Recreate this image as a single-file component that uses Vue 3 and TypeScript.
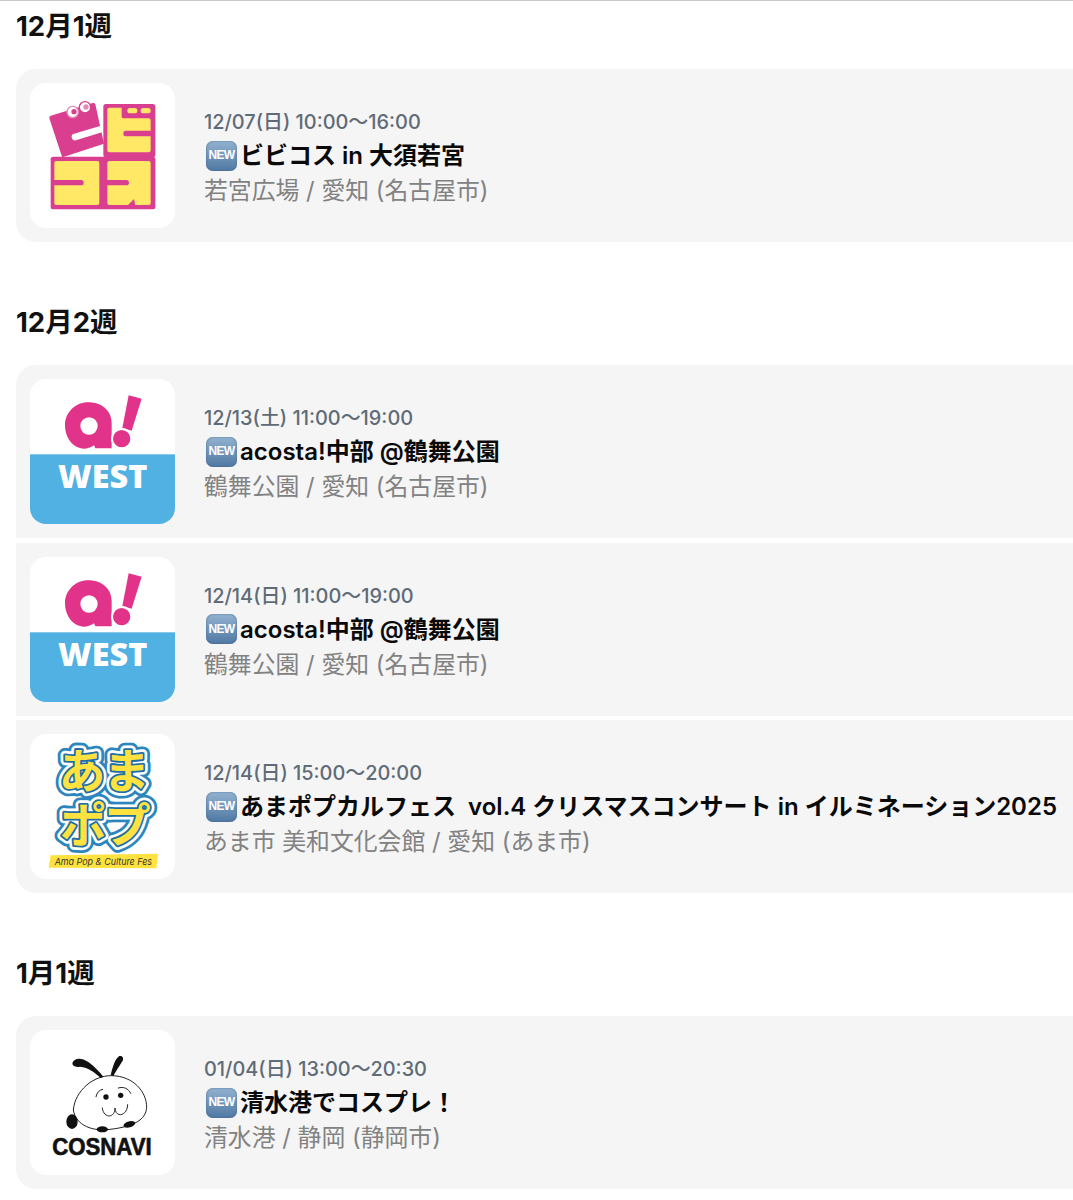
<script setup lang="ts">
type Logo = 'bibi' | 'west' | 'ama' | 'cosnavi'

interface EventItem {
  logo: Logo
  date: string
  title: string
  place: string
}

interface Week {
  label: string
  events: EventItem[]
}

const weeks: Week[] = [
  {
    label: '12月1週',
    events: [
      { logo: 'bibi', date: '12/07(日) 10:00〜16:00', title: 'ビビコス in 大須若宮', place: '若宮広場 / 愛知 (名古屋市)' }
    ]
  },
  {
    label: '12月2週',
    events: [
      { logo: 'west', date: '12/13(土) 11:00〜19:00', title: 'acosta!中部 @鶴舞公園', place: '鶴舞公園 / 愛知 (名古屋市)' },
      { logo: 'west', date: '12/14(日) 11:00〜19:00', title: 'acosta!中部 @鶴舞公園', place: '鶴舞公園 / 愛知 (名古屋市)' },
      { logo: 'ama', date: '12/14(日) 15:00〜20:00', title: 'あまポプカルフェス  vol.4 クリスマスコンサート in イルミネーション2025', place: 'あま市 美和文化会館 / 愛知 (あま市)' }
    ]
  },
  {
    label: '1月1週',
    events: [
      { logo: 'cosnavi', date: '01/04(日) 13:00〜20:30', title: '清水港でコスプレ！', place: '清水港 / 静岡 (静岡市)' }
    ]
  }
]
</script>

<template>
  <div class="page">
    <section v-for="week in weeks" :key="week.label" class="week">
      <h2 class="week-label">{{ week.label }}</h2>
      <div class="event-list">
        <div v-for="(ev, i) in week.events" :key="i" class="event">
          <div class="thumb">
            <svg v-if="ev.logo === 'bibi'" viewBox="30 24 435 435" width="145" height="145">
              <rect x="250" y="87" width="156" height="160" rx="8" fill="#d93f8e" />
              <rect x="92" y="245" width="314" height="158" rx="8" fill="#d93f8e" />
              <path d="M262 104 Q262 98 268 98 L305 98 L305 125 Q305 130 312 130 L386 130 Q392 130 392 136 L392 226 Q392 232 386 232 L268 232 Q262 232 262 226 Z" fill="#ffe866" />
              <rect x="322" y="99" width="30" height="16" rx="8" fill="#ffe866" />
              <rect x="362" y="99" width="30" height="16" rx="8" fill="#ffe866" />
              <rect x="310" y="167" width="90" height="17" rx="8" fill="#d93f8e" />
              <rect x="103" y="258" width="135" height="132" rx="6" fill="#ffe866" />
              <rect x="95" y="315" width="96" height="16" rx="8" fill="#d93f8e" />
              <rect x="262" y="258" width="130" height="132" rx="6" fill="#ffe866" />
              <rect x="255" y="315" width="72" height="16" rx="8" fill="#d93f8e" />
              <path d="M322 392 L342 372 L346 392 Z" fill="#d93f8e" />
              <path d="M92 122 L218 84 Q224 83 226 88 L252 206 L130 246 Q126 247 125 242 L88 130 Q87 124 92 122 Z" fill="#d93f8e" />
              <path d="M165 186 L238 164" stroke="#fff" stroke-width="20" stroke-linecap="round" />
              <circle cx="158" cy="111" r="17" fill="#fff" stroke="#e58ab8" stroke-width="4" />
              <circle cx="162" cy="110" r="8" fill="#d93f8e" />
              <circle cx="195" cy="97" r="17" fill="#fff" stroke="#d93f8e" stroke-width="4" />
              <circle cx="198" cy="96" r="8" fill="#e58ab8" />
            </svg>

            <svg v-else-if="ev.logo === 'west'" viewBox="30 27 435 435" width="145" height="145">
              <rect x="30" y="253" width="435" height="209" fill="#50b1e2" />
              <path d="M205 97 C245 97 275 122 275 160 L275 235 L226 235 L222 226 C212 233 202 236 192 236 C160 236 135 204 135 166 C135 128 165 97 205 97 Z" fill="#e2338b" />
              <circle cx="207" cy="168" r="26" fill="#fff" />
              <path d="M326 76 L365 86 L335 182 L307 174 Z" fill="#e2338b" />
              <circle cx="305" cy="206" r="29" fill="#e2338b" stroke="#fff" stroke-width="6" />
              <text x="248" y="353" text-anchor="middle" textLength="268" lengthAdjust="spacingAndGlyphs" class="west-text">WEST</text>
            </svg>

            <svg v-else-if="ev.logo === 'ama'" viewBox="30 27 435 435" width="145" height="145">
              <defs>
                <g id="ama-glyphs" class="ama-text">
                  <text x="186" y="190">あ</text><text x="320" y="190">ま</text>
                  <text x="190" y="350">ポ</text><text x="322" y="350">プ</text>
                </g>
              </defs>
              <g stroke-linejoin="round">
                <use href="#ama-glyphs" fill="#2a86bd" stroke="#2a86bd" stroke-width="44" />
                <use href="#ama-glyphs" fill="#fff" stroke="#fff" stroke-width="27" />
                <use href="#ama-glyphs" fill="#1d6ea6" stroke="#1d6ea6" stroke-width="11" />
                <use href="#ama-glyphs" fill="#ffe23f" />
              </g>
              <path d="M92 391 L414 386 L409 430 L86 428 Z" fill="#ffe23f" />
              <text x="250" y="420" text-anchor="middle" textLength="292" lengthAdjust="spacingAndGlyphs" class="ama-sub">Ama Pop &amp; Culture Fes</text>
            </svg>

            <svg v-else viewBox="30 30 435 435" width="145" height="145">
              <path d="M160 270 C165 212 220 166 275 167 C340 168 380 215 380 262 C378 300 340 320 270 328 C220 335 168 318 160 270 Z" fill="#fff" stroke="#222" stroke-width="3" />
              <path d="M157 130 C162 112 185 112 205 126 C222 138 238 155 250 170 L242 174 C225 158 205 142 180 140 C168 142 158 140 157 130 Z" fill="#111" />
              <path d="M272 166 C278 140 286 115 298 108 C308 106 312 114 308 122 C298 138 288 152 280 168 Z" fill="#111" />
              <ellipse cx="156" cy="305" rx="17" ry="22" fill="#111" />
              <ellipse cx="247" cy="328" rx="17" ry="9" fill="#111" />
              <ellipse cx="328" cy="313" rx="18" ry="9" transform="rotate(-15 328 313)" fill="#111" />
              <circle cx="258" cy="231" r="8" fill="#111" />
              <circle cx="302" cy="226" r="8" fill="#111" />
              <g fill="none" stroke="#222" stroke-width="3" stroke-linecap="round">
                <path d="M228 230 C230 218 238 210 248 208" />
                <path d="M295 204 C310 199 325 205 332 220" />
                <path d="M247 264 C250 296 285 296 285 264 C286 294 322 290 323 254" />
              </g>
              <text x="246" y="406" text-anchor="middle" textLength="298" lengthAdjust="spacingAndGlyphs" class="cosnavi-text">COSNAVI</text>
            </svg>
          </div>

          <div class="info">
            <div class="date">{{ ev.date }}</div>
            <div class="title">
              <span class="new-badge">NEW</span>{{ ev.title }}
            </div>
            <div class="place">{{ ev.place }}</div>
          </div>
        </div>
      </div>
    </section>
  </div>
</template>

<style>
html,
body {
  margin: 0;
  background: #fff;
}
</style>

<style scoped>
.page {
  width: 1073px;
  height: 1200px;
  box-sizing: border-box;
  overflow: hidden;
  border-top: 1px solid #c9c9c9;
  padding-left: 16px;
  font-family: Inter, "Noto Sans CJK JP", sans-serif;
  background: #fff;
}

.week {
  margin-bottom: 55px;
}

.week-label {
  margin: 0 0 18px;
  height: 50px;
  line-height: 50px;
  font-size: 27.5px;
  font-weight: 700;
  color: #111;
}

.event-list {
  display: flex;
  flex-direction: column;
  gap: 4.5px;
  margin-right: -30px;
  border-radius: 20px;
  overflow: hidden;
}

.event {
  display: flex;
  align-items: center;
  gap: 29px;
  height: 173px;
  box-sizing: border-box;
  padding: 14px;
  background: #f5f5f5;
}

.thumb {
  flex: none;
  width: 145px;
  height: 145px;
  border-radius: 16px;
  background: #fff;
  overflow: hidden;
}

.thumb svg {
  display: block;
}

.info {
  display: flex;
  flex-direction: column;
  min-width: 0;
}

.date {
  height: 35px;
  line-height: 38px;
  font-size: 19.9px;
  font-weight: 500;
  color: #5f6b76;
  white-space: nowrap;
}

.title {
  display: flex;
  align-items: center;
  height: 35px;
  line-height: 35px;
  font-size: 24px;
  font-weight: 600;
  color: #0a0a0a;
  white-space: pre;
}

.new-badge {
  flex: none;
  display: flex;
  align-items: center;
  justify-content: center;
  width: 31px;
  height: 30px;
  margin: 0 3px 0 2px;
  border-radius: 7px;
  background: linear-gradient(#93b2d0, #4f78a3);
  box-shadow: inset 0 0 2px #3f6288;
  color: #fff;
  font-family: "Liberation Sans", sans-serif;
  font-size: 12px;
  font-weight: 700;
  letter-spacing: -0.7px;
}

.place {
  height: 35px;
  line-height: 35px;
  font-size: 23.85px;
  color: #828282;
  white-space: nowrap;
}

.west-text {
  font-family: "Open Sans", sans-serif;
  font-size: 96px;
  font-weight: 800;
  fill: #fff;
}

.ama-text {
  font-family: "Noto Sans CJK JP", sans-serif;
  font-size: 140px;
  font-weight: 700;
  text-anchor: middle;
}

.ama-sub {
  font-family: Inter, sans-serif;
  font-size: 28px;
  font-style: italic;
  fill: #333;
}

.cosnavi-text {
  font-family: "Liberation Sans", sans-serif;
  font-size: 72px;
  font-weight: 700;
  fill: #111;
  stroke: #111;
  stroke-width: 2;
}
</style>
